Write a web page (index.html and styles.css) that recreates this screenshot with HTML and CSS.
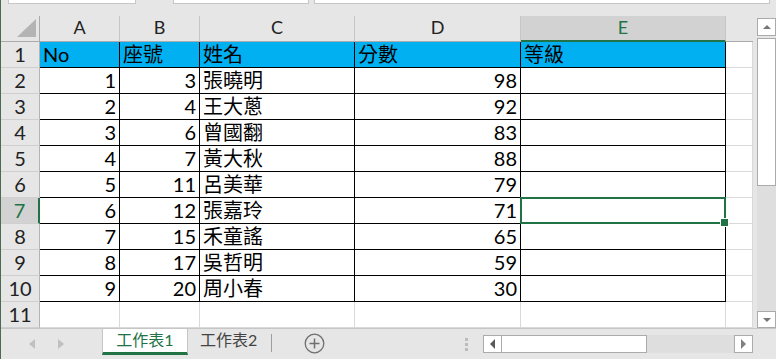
FILE: index.html
```html
<!DOCTYPE html>
<html lang="zh-Hant">
<head>
<meta charset="UTF-8">
<meta name="viewport" content="width=device-width, initial-scale=1.0">
<title>工作表1</title>
<link rel="stylesheet" href="styles.css">
</head>
<body>
<div class="app">
    <div class="topstrip">
        <div class="box name"></div>
        <div class="box fx1"></div>
        <div class="box fx2"></div>
    </div>

    <div class="main">
        <div class="sheet">
            <!-- column headers -->
            <div class="c corner"><span class="tri"></span></div>
            <div class="c hd">A</div>
            <div class="c hd">B</div>
            <div class="c hd">C</div>
            <div class="c hd">D</div>
            <div class="c hd sel">E</div>
            <div class="c hd last"></div>

            <div class="c rh">1</div>
            <div class="c b blue">No</div>
            <div class="c b blue">座號</div>
            <div class="c b blue">姓名</div>
            <div class="c b blue">分數</div>
            <div class="c b blue">等級</div>
            <div class="c"></div>

            <div class="c rh">2</div>
            <div class="c b n">1</div>
            <div class="c b n">3</div>
            <div class="c b">張曉明</div>
            <div class="c b n">98</div>
            <div class="c b"></div>
            <div class="c"></div>

            <div class="c rh">3</div>
            <div class="c b n">2</div>
            <div class="c b n">4</div>
            <div class="c b">王大蔥</div>
            <div class="c b n">92</div>
            <div class="c b"></div>
            <div class="c"></div>

            <div class="c rh">4</div>
            <div class="c b n">3</div>
            <div class="c b n">6</div>
            <div class="c b">曾國翻</div>
            <div class="c b n">83</div>
            <div class="c b"></div>
            <div class="c"></div>

            <div class="c rh">5</div>
            <div class="c b n">4</div>
            <div class="c b n">7</div>
            <div class="c b">黃大秋</div>
            <div class="c b n">88</div>
            <div class="c b"></div>
            <div class="c"></div>

            <div class="c rh">6</div>
            <div class="c b n">5</div>
            <div class="c b n">11</div>
            <div class="c b">呂美華</div>
            <div class="c b n">79</div>
            <div class="c b"></div>
            <div class="c"></div>

            <div class="c rh sel">7</div>
            <div class="c b n">6</div>
            <div class="c b n">12</div>
            <div class="c b">張嘉玲</div>
            <div class="c b n">71</div>
            <div class="c b active"></div>
            <div class="c"></div>

            <div class="c rh">8</div>
            <div class="c b n">7</div>
            <div class="c b n">15</div>
            <div class="c b">禾童謠</div>
            <div class="c b n">65</div>
            <div class="c b"></div>
            <div class="c"></div>

            <div class="c rh">9</div>
            <div class="c b n">8</div>
            <div class="c b n">17</div>
            <div class="c b">吳哲明</div>
            <div class="c b n">59</div>
            <div class="c b"></div>
            <div class="c"></div>

            <div class="c rh">10</div>
            <div class="c b n">9</div>
            <div class="c b n">20</div>
            <div class="c b">周小春</div>
            <div class="c b n">30</div>
            <div class="c b"></div>
            <div class="c"></div>

            <div class="c rh">11</div>
            <div class="c"></div>
            <div class="c"></div>
            <div class="c"></div>
            <div class="c"></div>
            <div class="c"></div>
            <div class="c"></div>
        </div>

        <div class="vscroll">
            <div class="sbtn up"><span class="arr-up"></span></div>
            <div class="vthumb"></div>
            <div class="vtrack"></div>
            <div class="sbtn down"><span class="arr-down"></span></div>
        </div>
    </div>

    <div class="bottombar">
        <div class="tabnav">
            <span class="nav-l"></span>
            <span class="nav-r"></span>
        </div>
        <div class="tab active-tab">工作表1</div>
        <div class="tab">工作表2</div>
        <div class="tabsep"></div>
        <div class="addsheet">
            <svg width="21" height="21" viewBox="0 0 21 21">
                <circle cx="10.5" cy="10.5" r="9.3" fill="none" stroke="#6f6f6f" stroke-width="1.3"/>
                <path d="M10.5 5.5v10M5.5 10.5h10" stroke="#6f6f6f" stroke-width="1.5"/>
            </svg>
        </div>
        <div class="splitter"><i></i><i></i><i></i></div>
        <div class="hscroll">
            <div class="hbtn"><span class="arr-left"></span></div>
            <div class="hthumb"></div>
            <div class="htrack"></div>
            <div class="hbtn"><span class="arr-right"></span></div>
        </div>
    </div>
</div>
</body>
</html>
```

FILE: styles.css
```css
* {
    box-sizing: border-box;
}
body {
    margin: 0;
    font-family: Lato, "Noto Sans CJK TC", sans-serif;
    background-color: #e6e6e6;
}
.app {
    width: 776px;
    height: 359px;
    border-left: 1px solid #4b6b55;
    background-color: #e6e6e6;
    overflow: hidden;
}

/* name box / formula bar edges */
.topstrip {
    height: 16px;
    display: flex;
}
.box {
    height: 4px;
    background-color: #fff;
    border: 1px solid #c6c6c6;
    border-top: none;
}
.box.name {
    margin-left: 7px;
    width: 128px;
}
.box.fx1 {
    margin-left: 37px;
    width: 136px;
}
.box.fx2 {
    margin-left: 5px;
    width: 456px;
}

.main {
    display: flex;
    height: 312px;
}
.sheet {
    display: grid;
    grid-template-columns: 39px 80px 80px 155px 166px 205px 27px;
    grid-template-rows: repeat(12, 26px);
    width: 752px;
    background-color: #fff;
}
.c {
    position: relative;
    border-right: 1px solid #d9d9d9;
    border-bottom: 1px solid #d9d9d9;
    padding: 0 3px;
    font-size: 20px;
    line-height: 25px;
    color: #000;
    white-space: nowrap;
    overflow: visible;
}
.n {
    text-align: right;
}
.b {
    border-color: #000;
}
.blue {
    background-color: #00b0f0;
}

/* headers */
.hd {
    background-color: #e6e6e6;
    border-right-color: #c6c6c6;
    border-bottom-color: #ababab;
    text-align: center;
    font-size: 18px;
    line-height: 22px;
    color: #222;
}
.hd.sel {
    background-color: #d2d2d2;
    border-bottom: 2px solid #217346;
    color: #217346;
}
.hd.last {
    border-right: none;
}
.corner {
    background-color: #e6e6e6;
    border-right-color: #ababab;
    border-bottom-color: #ababab;
    display: flex;
    justify-content: flex-end;
    align-items: flex-end;
    padding: 0 3px 4px 0;
}
.tri {
    width: 0;
    height: 0;
    border-style: solid;
    border-width: 0 0 18px 19px;
    border-color: transparent transparent #b4b4b4 transparent;
}
.rh {
    background-color: #e6e6e6;
    border-right-color: #b4b4b4;
    border-bottom-color: #cfcfcf;
    text-align: center;
    padding: 0;
    color: #222;
}
.rh.sel {
    background-color: #d2d2d2;
    border-right: 2px solid #217346;
    color: #217346;
}

/* current cell */
.active::after {
    content: "";
    position: absolute;
    top: -1px;
    left: -1px;
    right: -1px;
    bottom: -1px;
    border: 2px solid #217346;
    z-index: 2;
}
.active::before {
    content: "";
    position: absolute;
    right: -4px;
    bottom: -4px;
    width: 7px;
    height: 7px;
    background-color: #217346;
    border: 1px solid #fff;
    z-index: 3;
}

/* vertical scrollbar */
.vscroll {
    width: 23px;
    padding: 2px 0 0 4px;
    display: flex;
    flex-direction: column;
}
.sbtn {
    width: 19px;
    height: 18px;
    background-color: #fff;
    border: 1px solid #ababab;
    display: flex;
    align-items: center;
    justify-content: center;
}
.sbtn.down {
    height: 17px;
}
.vthumb {
    margin-top: 2px;
    height: 148px;
    background-color: #fff;
    border: 1px solid #ababab;
}
.vtrack {
    flex: 1;
    background-color: #dedede;
}
.arr-up {
    border-left: 4px solid transparent;
    border-right: 4px solid transparent;
    border-bottom: 4px solid #777;
}
.arr-down {
    border-left: 4px solid transparent;
    border-right: 4px solid transparent;
    border-top: 4px solid #777;
}

/* sheet tabs + horizontal scrollbar */
.bottombar {
    height: 31px;
    border-top: 1px solid #c6c6c6;
    display: flex;
    align-items: flex-start;
}
.tabnav {
    width: 101px;
    height: 30px;
    display: flex;
    align-items: center;
    padding-left: 28px;
}
.nav-l {
    border-top: 5px solid transparent;
    border-bottom: 5px solid transparent;
    border-right: 6px solid #c0c0c0;
}
.nav-r {
    margin-left: 23px;
    border-top: 5px solid transparent;
    border-bottom: 5px solid transparent;
    border-left: 6px solid #c0c0c0;
}
.tab {
    height: 26px;
    padding: 0 14px 0 12px;
    font-size: 16px;
    line-height: 22px;
    color: #444;
}
.active-tab {
    width: 86px;
    padding: 0;
    text-align: center;
    background-color: #fff;
    border-left: 1px solid #c6c6c6;
    border-right: 1px solid #c6c6c6;
    border-bottom: 3px solid #217346;
    color: #217346;
}
.tabsep {
    width: 1px;
    height: 18px;
    margin-top: 5px;
    background-color: #9d9d9d;
}
.addsheet {
    margin-left: 32px;
    margin-top: 4px;
    height: 21px;
}
.splitter {
    margin-left: 140px;
    margin-top: 9px;
    display: flex;
    flex-direction: column;
    gap: 2px;
}
.splitter i {
    display: block;
    width: 3px;
    height: 3px;
    background-color: #bcbcbc;
}
.hscroll {
    margin-left: 15px;
    margin-top: 6px;
    width: 270px;
    height: 18px;
    display: flex;
}
.hbtn {
    width: 19px;
    height: 18px;
    background-color: #fff;
    border: 1px solid #ababab;
    display: flex;
    align-items: center;
    justify-content: center;
}
.hthumb {
    width: 145px;
    background-color: #fff;
    border: 1px solid #ababab;
    border-left: none;
}
.htrack {
    flex: 1;
    background-color: #dedede;
}
.arr-left {
    border-top: 5px solid transparent;
    border-bottom: 5px solid transparent;
    border-right: 5px solid #5a5a5a;
}
.arr-right {
    border-top: 5px solid transparent;
    border-bottom: 5px solid transparent;
    border-left: 5px solid #808080;
}
```
